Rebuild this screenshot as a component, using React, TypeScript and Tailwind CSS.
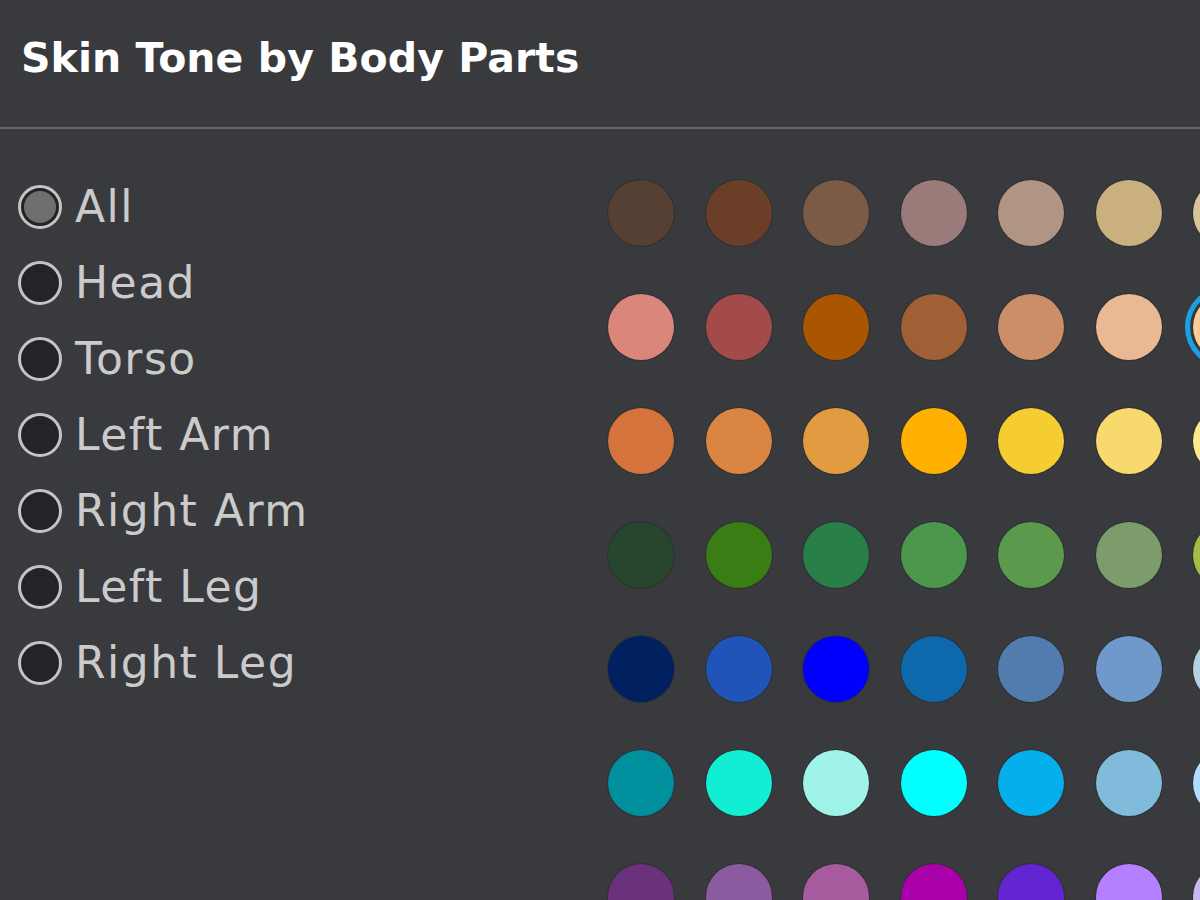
import React from "react";

const rows: string[][] = [
  ["#563f33", "#6b3f27", "#7c5b46", "#9a7b79", "#b09585", "#cbb07f", "#d7c59a"],
  ["#da867a", "#a34b4b", "#aa5500", "#a05f35", "#cc8e69", "#eab892", "#ffcc99"],
  ["#d5733d", "#da8541", "#e29b40", "#ffb000", "#f5cd30", "#f8d96d", "#fdea8d"],
  ["#27462d", "#3a7d15", "#287f47", "#4b974b", "#5b9a4c", "#7c9c6b", "#a4bd47"],
  ["#002060", "#2154b9", "#0000ff", "#0d69ac", "#527cae", "#6e99ca", "#b4d2e4"],
  ["#008f9c", "#12eed4", "#9ff3e9", "#00ffff", "#04afec", "#80bbdb", "#afddff"],
  ["#6b327c", "#8c5b9f", "#a75b9f", "#aa00aa", "#6225d1", "#b480ff", "#c8b8f0"],
];

const parts = ["All", "Head", "Torso", "Left Arm", "Right Arm", "Left Leg", "Right Leg"];

export default function App() {
  return (
    <div
      className="w-[1200px] h-[900px] overflow-hidden bg-[#393a3d]"
      style={{ fontFamily: '"DejaVu Sans", sans-serif' }}
    >
      <div className="h-[127px] flex items-center pl-[21px] pb-[10px]">
        <h1 className="text-[41px] font-bold text-white leading-none tracking-[0.05px]">
          Skin Tone by Body Parts
        </h1>
      </div>
      <div className="h-[2px] bg-[#66686b]" />
      <div className="flex">
        <div className="w-[608px] shrink-0 pt-[40px] pl-[18px] flex flex-col">
          {parts.map((p, i) => (
            <div key={p} className="h-[76px] flex items-center">
              <div className="w-[44px] h-[44px] rounded-full border-[3px] border-[#c4c4c4] p-[3px] bg-[#232427]">
                <div className={`w-full h-full rounded-full ${i === 0 ? "bg-[#6f6f70]" : "bg-[#232427]"}`} />
              </div>
              <span className="ml-[13px] text-[44px] leading-none text-[#cbcbcb] tracking-[1.5px]">{p}</span>
            </div>
          ))}
        </div>
        <div className="pt-[51px] flex flex-col gap-[48px]">
          {rows.map((r, ri) => (
            <div key={ri} className="flex gap-[31.5px]">
              {r.map((c, ci) => {
                const sel = ri === 1 && ci === 6;
                return (
                  <div
                    key={ci}
                    className={`w-[66px] h-[66px] shrink-0 rounded-full shadow-[0_0_0_1px_rgba(0,0,0,0.18)] ${
                      sel ? "outline-[5px] outline-solid outline-[#1c9fe6] outline-offset-[3px]" : ""
                    }`}
                    style={{ backgroundColor: c }}
                  />
                );
              })}
            </div>
          ))}
        </div>
      </div>
    </div>
  );
}
